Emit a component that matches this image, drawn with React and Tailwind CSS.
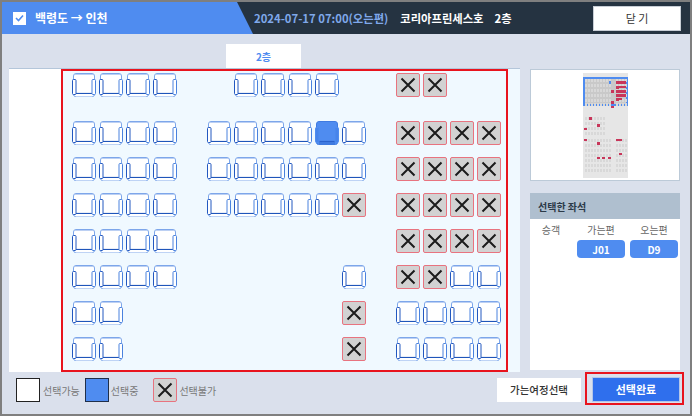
const FONT = "font-['Noto_Sans_CJK_KR','Noto_Sans',sans-serif]";

const ROWS = [
  "ssss..ssss..xx..",
  "ssss.ssssbs.xxxx",
  "ssss.ssssss.xxxx",
  "ssss.sssssx.xxxx",
  "ssss........xxxx",
  "ssss......s.xxss",
  "ss........x.ssss",
  "ss........x.ssss",
];

const Seat = ({ on }) => (
  <svg width="24" height="25" viewBox="0 0 24 25" fill="none">
    <path d="M1.5 8V3A2.5 2.5 0 0 1 4 0.5H20A2.5 2.5 0 0 1 22.5 3V8V21.5A2 2 0 0 1 20.5 23.5H3.5A2 2 0 0 1 1.5 21.5Z" fill={on ? "#4f8cf0" : "#fff"} stroke={on ? "#3f7ae0" : "#7da6ea"} />
    <path d="M3 1.5H21" stroke={on ? "#4f8cf0" : "#bcd0f3"} />
    <path d="M4 20.5H20" stroke={on ? "#2a62cc" : "#1f55ba"} strokeWidth="1.2" />
    <rect x="4" y="21" width="16" height="2.5" fill={on ? "#3f7ae0" : "#fff"} />
    <rect x="0.5" y="6.5" width="3.5" height="15" rx="1" fill={on ? "#4784ea" : "#fff"} stroke={on ? "#4f8cf0" : "#2358c0"} />
    <rect x="20" y="6.5" width="3.5" height="15" rx="1" fill={on ? "#4784ea" : "#fff"} stroke={on ? "#4f8cf0" : "#4a82de"} />
  </svg>
);

const Blocked = () => (
  <div className="w-[24px] h-[24px] flex items-center justify-center rounded-[2px] border border-[#e8737f] bg-[#d2d2d2]">
    <svg width="16" height="16" viewBox="0 0 16 16" fill="none">
      <path d="M1.5 1.5L14.5 14.5M14.5 1.5L1.5 14.5" stroke="#1c1c1c" strokeWidth="2" />
    </svg>
  </div>
);

const MAP_COLS = [2, 5, 8, 11, 14, 17, 20, 23, 26, 33, 36, 39, 42];
const MAP_ROWS = [6, 11, 16, 21, 26, 30, 44, 49, 54, 59, 66, 71, 76, 81, 86, 91, 96];
const MAP_RED = [
  [33, 8, 3, 3], [36, 8, 7, 3], [33, 13, 3, 3], [36, 13, 7, 2], [28, 17, 3, 3], [33, 17, 3, 3], [36, 17, 7, 3],
  [33, 21, 3, 3], [36, 21, 7, 3], [33, 25, 3, 3], [36, 25, 3, 2], [28, 28, 3, 3], [28, 33, 3, 2],
  [6, 44, 3, 3], [14, 51, 3, 3], [1, 55, 3, 2], [1, 66, 3, 2], [14, 69, 3, 3], [33, 66, 3, 2], [36, 66, 3, 2],
  [36, 80, 3, 2], [14, 84, 3, 2], [19, 84, 3, 2], [25, 84, 3, 2],
];

const Minimap = () => (
  <svg width="45" height="105" viewBox="0 0 45 105" shapeRendering="crispEdges">
    <rect width="45" height="105" fill="#e6e6e6" />
    <rect x="1" y="5" width="43" height="27" fill="#c9c9c9" stroke="#4f8cf0" strokeWidth="2" />
    {MAP_ROWS.flatMap((y) =>
      MAP_COLS.filter((x) => y < 40 || y > 60 || x < 23).map((x) => (
        <rect key={`${x}-${y}`} x={x} y={y} width="2" height="3" fill="#d8d8d8" />
      ))
    )}
    <rect x="26" y="8" width="2" height="3" fill="#4f8cf0" />
    {MAP_RED.map(([x, y, w, h]) => (
      <rect key={`${x}-${y}`} x={x} y={y} width={w} height={h} fill="#c8365a" />
    ))}
  </svg>
);

const App = () => {
  return (
    <div className={`w-[692px] h-[416px] bg-[#7f7f7f] p-[2px] overflow-hidden ${FONT}`}>
      <div className="flex flex-col h-[412px] bg-[#dae0ec]">
        <header className="flex h-[32px] bg-[#253341]">
          <div className="flex items-center w-[251px] pl-[11px] gap-[9px] bg-[#4f8cf0] [clip-path:polygon(0_0,235px_0,100%_100%,0_100%)]">
            <span className="flex items-center justify-center w-[13px] h-[13px] bg-white">
              <svg width="9" height="8" viewBox="0 0 9 8" fill="none">
                <path d="M1 4L3.5 6.5L8 1.5" stroke="#4f8cf0" strokeWidth="1.6" />
              </svg>
            </span>
            <span className="text-[12px] font-bold text-white">백령도 → 인천</span>
          </div>
          <div className="flex items-center flex-1 pl-[1px] pr-[7px]">
            <span className="text-[11.3px] font-bold text-[#7fa8ea]">2024-07-17 07:00(오는편)</span>
            <span className="ml-[12px] text-[11.3px] font-bold text-white">코리아프린세스호</span>
            <span className="ml-[11px] text-[11.3px] font-bold text-white">2층</span>
            <button className="ml-auto mr-[2px] w-[88px] h-[25px] bg-white text-[11px] text-[#333] border border-[#c8ced6]">닫 기</button>
          </div>
        </header>

        <div className="flex pl-[7px] pt-[10px] gap-[10px]">
          <div className="flex flex-col w-[511px]">
            <div className="w-[75px] h-[24px] ml-[217px] flex items-center justify-center bg-white text-[10px] font-bold text-[#4f8cf0]">2층</div>
            <div className="flex h-[304px] border-t border-[#b4c6da] bg-[#f0f9ff]">
              <div className="w-[52px] bg-white" />
              <div className="w-[447px] h-[303px] border-2 border-[#e8141e] pl-[9px] pt-[2px]">
                <div className="grid grid-cols-[repeat(16,27px)] grid-rows-[48px_repeat(7,36px)]">
                  {ROWS.map((row, r) =>
                    row.split("").map((c, i) => (
                      <div key={`${r}-${i}`}>
                        {c === "s" && <Seat />}
                        {c === "b" && <Seat on />}
                        {c === "x" && <Blocked />}
                      </div>
                    ))
                  )}
                </div>
              </div>
            </div>
          </div>

          <div className="flex flex-col w-[150px] pt-[25px]">
            <div className="flex justify-center h-[112px] bg-white border border-[#bccad8] pt-[3px]">
              <Minimap />
            </div>
            <div className="mt-[12px] h-[177px] bg-white">
              <div className="flex items-center h-[26px] pl-[8px] bg-[#afbfcf] text-[10px] font-bold text-[#2c3a48]">선택한 좌석</div>
              <div className="grid grid-cols-[42px_48px_48px] gap-x-[5px] pt-[3px] text-[10px] text-[#666] text-center">
                <span className="h-[18px]">승객</span>
                <span className="h-[18px]">가는편</span>
                <span className="h-[18px]">오는편</span>
                <span />
                <span className="flex items-center justify-center h-[18px] rounded-[4px] bg-[#4f8cf0] font-bold text-white">J01</span>
                <span className="flex items-center justify-center h-[18px] rounded-[4px] bg-[#4f8cf0] font-bold text-white">D9</span>
              </div>
            </div>
          </div>
        </div>

        <footer className="flex items-center pl-[14px] pr-[6px] mt-[2px] h-[32px]">
          <div className="w-[24px] h-[24px] bg-white border border-[#222]" />
          <span className="ml-[3px] text-[10px] text-[#777]">선택가능</span>
          <div className="ml-[5px] w-[24px] h-[24px] bg-[#4f8cf0] border border-[#1f2f4a]" />
          <span className="ml-[2px] text-[10px] text-[#777]">선택중</span>
          <div className="ml-[15px]"><Blocked /></div>
          <span className="ml-[2px] text-[10px] text-[#777]">선택불가</span>
          <button className="ml-auto w-[84px] h-[24px] bg-white text-[10.5px] font-medium text-[#333]">가는여정선택</button>
          <div className="self-start -mt-[2px] ml-[4px] w-[99px] h-[33px] border-2 border-[#e8141e] pl-[5px] pt-[3px]">
            <button className="block w-[88px] h-[25px] bg-[#2f6fed] border border-[#b4c6e8] text-[11px] font-bold text-white">선택완료</button>
          </div>
        </footer>
      </div>
    </div>
  );
};

export default App;
